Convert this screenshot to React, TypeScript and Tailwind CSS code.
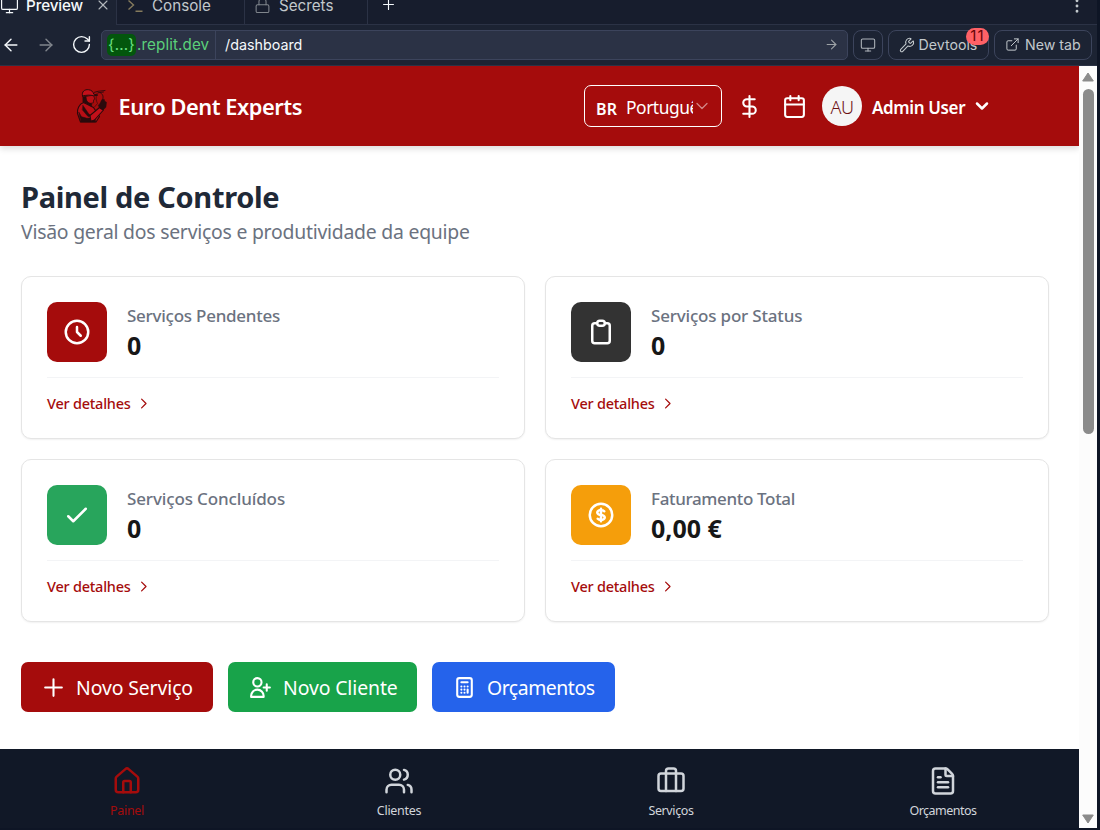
import type { ReactNode } from "react";
import {
  ArrowLeft,
  ArrowRight,
  Briefcase,
  Calendar,
  ChevronDown,
  DollarSign,
  EllipsisVertical,
  ExternalLink,
  FileText,
  House,
  Lock,
  Monitor,
  Plus,
  RotateCw,
  Users,
  Wrench,
  X,
} from "lucide-react";

function Outline({ d, className }: { d: string; className: string }) {
  return (
    <svg viewBox="0 0 24 24" fill="none" stroke="currentColor" strokeWidth={2} strokeLinecap="round" strokeLinejoin="round" className={className}>
      <path d={d} />
    </svg>
  );
}

const paths = {
  clock: "M12 8v4l3 3m6-3a9 9 0 11-18 0 9 9 0 0118 0z",
  clipboard:
    "M9 5H7a2 2 0 00-2 2v12a2 2 0 002 2h10a2 2 0 002-2V7a2 2 0 00-2-2h-2M9 5a2 2 0 002 2h2a2 2 0 002-2M9 5a2 2 0 012-2h2a2 2 0 012 2",
  check: "M5 13l4 4L19 7",
  money:
    "M12 8c-1.657 0-3 .895-3 2s1.343 2 3 2 3 .895 3 2-1.343 2-3 2m0-8c1.11 0 2.08.402 2.599 1M12 8V7m0 1v8m0 0v1m0-1c-1.11 0-2.08-.402-2.599-1M21 12a9 9 0 11-18 0 9 9 0 0118 0z",
  chevron: "M9 5l7 7-7 7",
  plus: "M12 4v16m8-8H4",
  userAdd: "M18 9v3m0 0v3m0-3h3m-3 0h-3m-2-5a4 4 0 11-8 0 4 4 0 018 0zM3 20a6 6 0 0112 0v1H3v-1z",
  calculator:
    "M9 7h6m0 10v-3m-3 3h.01M9 17h.01M9 14h.01M12 14h.01M15 11h.01M12 11h.01M9 11h.01M7 21h10a2 2 0 002-2V5a2 2 0 00-2-2H7a2 2 0 00-2 2v14a2 2 0 002 2z",
};

function TabBar() {
  return (
    <div className="flex h-[25px] shrink-0 overflow-hidden text-[15.2px] leading-[20px] text-[#c2c8cc]">
      <div className="flex h-[25px] w-[116px] items-start bg-[#1c2333] text-[#f5f9fc]">
        <Monitor className="-mt-[4px] size-[19px] shrink-0" strokeWidth={1.5} />
        <span className="-mt-[4px] ml-[7px] w-[58px] font-medium tracking-[-0.1px]">Preview</span>
        <X className="mt-[-3px] ml-[11px] size-[16px] shrink-0 text-[#b4b9bd]" strokeWidth={1.6} />
      </div>
      <div className="flex w-[128px] items-start border-b border-l border-[#2b3245] bg-[#171d2d]">
        <svg viewBox="0 0 16 16" className="mt-[-2px] ml-[10px] size-[16px]" fill="none" stroke="#857b5d" strokeWidth={1.4}>
          <path d="M1.5 2.500l5 4.500-5 4.500M8.500 13.200h7" />
        </svg>
        <span className="-mt-[4px] ml-[9px]">Console</span>
      </div>
      <div className="flex w-[123px] items-start border-b border-l border-[#2b3245] bg-[#171d2d]">
        <Lock className="-mt-[3px] ml-[9px] size-[17px] text-[#80868d]" strokeWidth={1.5} />
        <span className="-mt-[4px] ml-[8px]">Secrets</span>
      </div>
      <div className="flex flex-1 items-start border-b border-l border-[#2b3245] bg-[#171d2d]">
        <Plus className="mt-[-4px] ml-[12px] size-[17px] text-[#f5f9fc]" strokeWidth={1.6} />
        <EllipsisVertical className="mt-[-3px] mr-[11px] ml-auto size-[18px] text-[#c2c8cc]" strokeWidth={1.8} />
      </div>
    </div>
  );
}

function ToolButton({ children, className }: { children: ReactNode; className: string }) {
  return (
    <button className={`relative flex h-[30px] shrink-0 items-center rounded-[8px] border border-[#3c445c] text-[14.2px] text-[#c2c8cc] ${className}`}>
      {children}
    </button>
  );
}

function Toolbar() {
  return (
    <div className="flex h-[41px] shrink-0 items-center border-b border-[#2b3245] bg-[#1c2333] pb-px">
      <ArrowLeft className="ml-px size-[20px] shrink-0 text-[#f5f9fc]" strokeWidth={1.7} />
      <ArrowRight className="ml-[15px] size-[20px] shrink-0 text-[#80868d]" strokeWidth={1.7} />
      <RotateCw className="ml-[15px] size-[21px] shrink-0 text-[#f5f9fc]" strokeWidth={1.6} />
      <div className="ml-[9px] flex h-[30px] w-[747px] shrink-0 items-center rounded-[5px] border border-[#3c445c] bg-[#2b3245]">
        <div className="flex h-full w-[114px] items-center border-r border-[#3c445c] pl-[5px] text-[15.2px] text-[#5bd07a]">
          <span className="flex h-[22px] w-[29px] items-center justify-center rounded-[5px] bg-[#03560d] pt-px tracking-[0.2px] text-[#6be084]">{"{...}"}</span>
          <span className="ml-px pt-[2px] tracking-[0.1px]">.replit.dev</span>
        </div>
        <span className="ml-[9px] text-[14.3px] text-[#f5f9fc]">/dashboard</span>
        <ArrowRight className="mr-[8px] ml-auto size-[15px] text-[#9da2a6]" strokeWidth={1.7} />
      </div>
      <ToolButton className="ml-[5px] w-[30px] justify-center">
        <Monitor className="size-[16px] text-[#aeb4bb]" strokeWidth={1.6} />
      </ToolButton>
      <ToolButton className="ml-[5px] w-[101px] pl-[10px]">
        <Wrench className="size-[16px] -scale-x-100 rotate-90" strokeWidth={1.6} />
        <span className="ml-[3.5px]">Devtools</span>
        <span className="absolute -top-[3px] -right-px flex h-[17px] w-[23px] items-center justify-center rounded-full bg-[#ff6166] text-[15px] tracking-[1.2px] text-[#660507]">11</span>
      </ToolButton>
      <ToolButton className="ml-[5px] w-[98px] pl-[10px]">
        <ExternalLink className="size-[15px]" strokeWidth={1.6} />
        <span className="ml-[5px]">New tab</span>
      </ToolButton>
    </div>
  );
}

function Logo() {
  return (
    <svg viewBox="0 0 44 44" className="size-[44px]" fill="#2a0a0c" stroke="#2a0a0c" strokeLinecap="round" strokeLinejoin="round">
      <path d="M16 12.500L23.500 11l1.300 4.200-1.200.6-.2 3-3.400.7-3-1.500z" fill="#b80e15" strokeWidth="0.700" />
      <path d="M12.500 12c-1.200-4.500 2.300-6.800 6-6.300 3.200.3 4.700 2.200 5.300 4.500l4 .9-4.200.7c-3.200-1-7.200-.8-11.100.2z" fill="#c3101a" strokeWidth="1" />
      <path d="M13 12.800l2.800-.6.500 3.800 2.200 2.800 3.300 1-.3 3.200-5-3.500-3.500-1.500z" strokeWidth="0.500" />
      <path d="M13.500 18.500c-4.500 1.700-6.500 6.500-6 11l3 8.500h15.500l3.500-5.500-6-9-5-2.500z" fill="#b80e15" strokeWidth="1.100" />
      <path d="M9 28.500l2.500 4.300 5.500 1.500 8-.8.500 4.500H11z" strokeWidth="0.600" />
      <path d="M13 21.500l5.500 8 3 2.800-3.500.2-5.500-6.500z" strokeWidth="0.500" />
      <path d="M20 31.500l9.500-8 4 2.500-9 10-3.500 1.300z" fill="#c3101a" strokeWidth="1.100" />
      <path d="M30 19.500l1.800-3.800 2.400-.4.600 2 1.700 1-.6 5-2.900 2.600-3.500-1.900-1.200-2.500z" strokeWidth="0.500" />
      <path d="M24.500 8.300l3.500-1 7-.8M28 8.800l5.500-.8M30.500 8.800c3 2 3 4.500 2 7.200" fill="none" strokeWidth="0.900" />
      <path d="M27 9.500c-1.500 4-1 7 .5 10l-3 3.500" fill="none" strokeWidth="0.600" />
    </svg>
  );
}

function Header() {
  return (
    <header className="flex h-[80px] shrink-0 items-center bg-[#a50c0c] text-white shadow-[0_3px_6px_rgba(0,0,0,0.13)]">
      <div className="ml-[70px]">
        <Logo />
      </div>
      <span className="mt-[3px] ml-[4.600px] w-[465.400px] text-[21.8px] font-semibold tracking-[-0.46px]">Euro Dent Experts</span>
      <button className="flex h-[42px] w-[138px] shrink-0 items-center rounded-[7px] border border-white pl-[11px]">
        <span className="mt-[5px] w-[30px] text-left text-[16px] font-semibold tracking-[0.3px]">BR</span>
        <span className="mt-[3px] w-[67px] overflow-hidden text-left text-[17.400px] tracking-[-0.45px] whitespace-nowrap">Português</span>
        <ChevronDown className="-ml-px size-[20px] shrink-0 opacity-50" strokeWidth={1.5} />
      </button>
      <DollarSign className="ml-[15px] size-[25px] shrink-0" />
      <Calendar className="ml-[20px] size-[25px] shrink-0" />
      <div className="ml-[15px] flex size-[40px] shrink-0 items-center justify-center rounded-full bg-[#f5f5f5] pt-[2px] text-[18px] font-light tracking-[-0.6px] text-[#6d1013]">AU</div>
      <span className="mt-[3px] ml-[10px] w-[95px] shrink-0 text-[17px] font-semibold tracking-[-0.37px] whitespace-nowrap">Admin User</span>
      <ChevronDown className="ml-[5px] size-[20px] shrink-0" strokeWidth={3} />
    </header>
  );
}

type CardData = { label: string; value: string; icon: string; box: string; labelSpacing: string };

const cards: CardData[] = [
  { label: "Serviços Pendentes", value: "0", icon: paths.clock, box: "bg-[#a50c0c]", labelSpacing: "tracking-[-0.25px]" },
  { label: "Serviços por Status", value: "0", icon: paths.clipboard, box: "bg-[#333333]", labelSpacing: "tracking-[-0.19px]" },
  { label: "Serviços Concluídos", value: "0", icon: paths.check, box: "bg-[#28a55c]", labelSpacing: "tracking-[-0.13px]" },
  { label: "Faturamento Total", value: "0,00 €", icon: paths.money, box: "bg-[#f59e0b]", labelSpacing: "tracking-[-0.35px]" },
];

function StatCard({ label, value, icon, box, labelSpacing }: CardData) {
  return (
    <section className="h-[163px] rounded-[10px] border border-[#e5e5e5] bg-white p-[25px] shadow-[0_1px_2px_rgba(0,0,0,0.06)]">
      <div className="flex h-[60px] items-center">
        <div className={`flex size-[60px] items-center justify-center rounded-[10px] text-white ${box}`}>
          <Outline d={icon} className="size-[30px]" />
        </div>
        <div className="ml-[20px]">
          <div className={`text-[17px] leading-[28px] font-medium text-[#6b7280] ${labelSpacing}`}>{label}</div>
          <div className="-mt-[2px] text-[25px] leading-[34px] font-bold text-[#171717]">{value}</div>
        </div>
      </div>
      <div className="mt-[15px] flex items-center border-t border-[#f3f4f6] pt-[15px] text-[14.500px] leading-[20px] font-medium tracking-[-0.23px] text-[#a50c0c]">
        Ver detalhes
        <Outline d={paths.chevron} className="mt-px ml-[5px] size-[15px]" />
      </div>
    </section>
  );
}

function Action({ label, icon, className }: { label: string; icon: string; className: string }) {
  return (
    <button className={`flex h-[50px] items-center rounded-[7px] pl-[20px] text-[19.4px] whitespace-nowrap text-white ${className}`}>
      <Outline d={icon} className="size-[25px] shrink-0" />
      <span className="ml-[10px] pt-[2px]">{label}</span>
    </button>
  );
}

function BottomNav() {
  const icon = "size-[30px]";
  return (
    <nav className="-ml-[9px] grid h-[79px] w-[1088px] shrink-0 grid-cols-4 bg-[#111827] pt-[17px] text-[12.500px] leading-[18px] text-[#d1d5db]">
      <a className="flex flex-col items-center gap-[6px] tracking-[-0.3px] text-[#a50c0c]">
        <House className={icon} />
        Painel
      </a>
      <a className="flex flex-col items-center gap-[6px] tracking-[-0.3px]">
        <Users className={icon} />
        Clientes
      </a>
      <a className="flex flex-col items-center gap-[6px] tracking-[-0.4px]">
        <Briefcase className={icon} />
        Serviços
      </a>
      <a className="flex flex-col items-center gap-[6px] tracking-[-0.5px]">
        <FileText className={icon} />
        Orçamentos
      </a>
    </nav>
  );
}

function Scrollbar() {
  return (
    <div className="flex w-[18px] shrink-0 flex-col items-center bg-[#fcfcfc] pt-[6px] pb-[4px] text-[#8b8b8b]">
      <svg viewBox="0 0 12 10" className="h-[10px] w-[12px]" fill="currentColor" stroke="currentColor" strokeLinejoin="round">
        <path d="M6 1L11.300 9H.7z" />
      </svg>
      <div className="mt-[7px] h-[345px] w-[11px] rounded-full bg-[#8b8b8b]" />
      <svg viewBox="0 0 12 10" className="mt-auto h-[10px] w-[12px]" fill="currentColor" stroke="currentColor" strokeLinejoin="round">
        <path d="M6 9L11.300 1H.7z" />
      </svg>
    </div>
  );
}

export default function App() {
  return (
    <div className="flex h-[830px] w-[1100px] overflow-hidden bg-[#0e1525] font-['Inter',sans-serif]">
      <div className="flex h-[828px] w-[1097px] shrink-0 flex-col">
        <TabBar />
        <Toolbar />
        <div className="flex min-h-0 flex-1 font-['Noto_Sans',sans-serif]">
          <div className="flex w-[1079px] shrink-0 flex-col overflow-hidden bg-white">
            <Header />
            <main className="flex-1 pt-[32px] pl-[21px]">
              <h1 className="text-[29px] leading-[38px] font-bold tracking-[-0.33px] text-[#1f2937]">Painel de Controle</h1>
              <p className="text-[19.4px] leading-[32px] tracking-[-0.24px] text-[#6b7280]">Visão geral dos serviços e produtividade da equipe</p>
              <div className="mt-[28px] grid w-[1028px] grid-cols-2 gap-[20px]">
                {cards.map((card) => (
                  <StatCard key={card.label} {...card} />
                ))}
              </div>
              <div className="mt-[40px] flex gap-[15px]">
                <Action label="Novo Serviço" icon={paths.plus} className="w-[192px] bg-[#a50c0c] tracking-[-0.1px]" />
                <Action label="Novo Cliente" icon={paths.userAdd} className="w-[189px] bg-[#18a34a] tracking-[-0.1px]" />
                <Action label="Orçamentos" icon={paths.calculator} className="w-[183px] bg-[#2563eb] tracking-[-0.45px]" />
              </div>
            </main>
            <BottomNav />
          </div>
          <Scrollbar />
        </div>
      </div>
    </div>
  );
}
